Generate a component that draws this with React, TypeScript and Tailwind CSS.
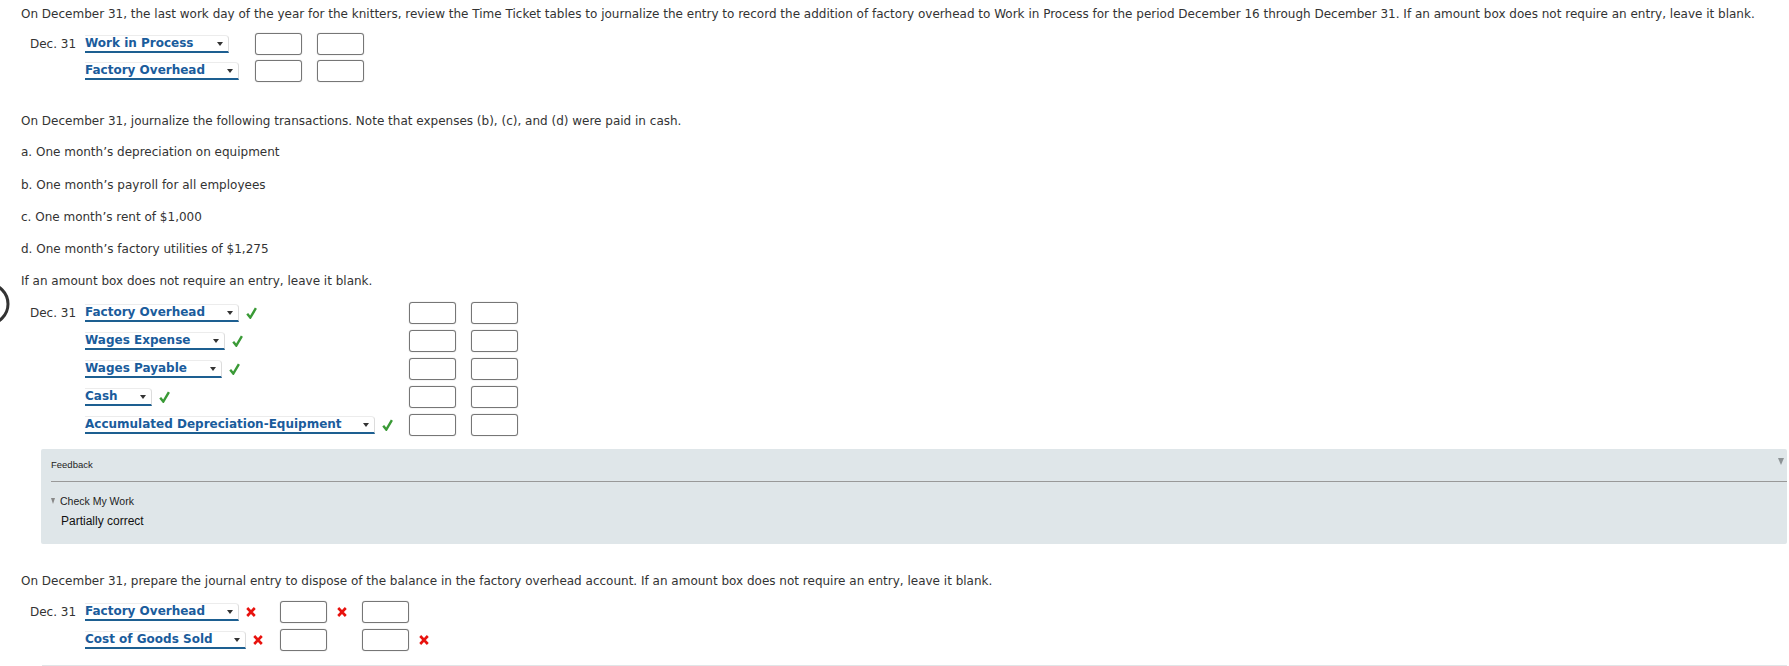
import React from "react";

type Mark = "ok" | "bad" | null;

function Check() {
  return (
    <svg width="11" height="12" viewBox="0 0 11 12" className="shrink-0">
      <path d="M1.2 6.8 L4.3 10.6 L9.9 1.2" fill="none" stroke="#3a9a36" strokeWidth="2.4" />
    </svg>
  );
}

function Cross() {
  return (
    <svg width="10" height="10" viewBox="0 0 10 10" className="shrink-0">
      <path d="M1.2 1 L8.8 9 M8.8 1 L1.2 9" fill="none" stroke="#e8120e" strokeWidth="2.6" />
    </svg>
  );
}

function Select({ label, className, mark }: { label: string; className: string; mark?: Mark }) {
  return (
    <div className="flex items-center gap-[7px]">
      <div
        className={`relative flex h-[18px] items-center rounded-tr-[4px] border-t border-r border-b-2 border-t-[#ececec] border-r-[#dcdcdc] border-b-[#1d5f91] bg-white text-[12px] font-bold text-[#1a5c9c] ${className}`}
      >
        <span className="leading-[15px]">{label}</span>
        <span className="absolute right-[5px] top-[6px] h-0 w-0 border-x-[3px] border-t-[4px] border-x-transparent border-t-[#333]" />
      </div>
      {mark === "ok" && <Check />}
      {mark === "bad" && <Cross />}
    </div>
  );
}

function Box() {
  return <div className="h-[22px] w-[47px] shrink-0 rounded-[3px] border border-[#767676] bg-white shadow-[0_0_1px_#999]" />;
}

function Date({ show }: { show: boolean }) {
  return <div className="w-[64px] shrink-0 pl-[9px] leading-[16px]">{show ? "Dec. 31" : ""}</div>;
}

export default function App() {
  return (
    <div className="relative min-h-[666px] bg-white pl-[21px] pr-[2px] pt-[6px] font-['DejaVu_Sans',Verdana,sans-serif] text-[12px] text-[#333]">
      <svg width="12" height="44" viewBox="0 0 12 44" className="absolute left-0 top-[283px]">
        <circle cx="-12" cy="21" r="20" fill="none" stroke="#333" strokeWidth="3" />
      </svg>

      <p className="leading-[16px]">
        On December 31, the last work day of the year for the knitters, review the Time Ticket tables to journalize the entry to record the addition of factory overhead to Work in Process for the period December 16 through December 31. If an amount box does not require an entry, leave it blank.
      </p>

      <div className="mt-[11px] flex flex-col gap-[6px]">
        <div className="flex h-[21px] items-center">
          <Date show />
          <div className="w-[170px] shrink-0">
            <Select label="Work in Process" className="w-[144px]" />
          </div>
          <div className="flex gap-[15px]">
            <Box />
            <Box />
          </div>
        </div>
        <div className="flex h-[21px] items-center">
          <Date show={false} />
          <div className="w-[170px] shrink-0">
            <Select label="Factory Overhead" className="w-[154px]" />
          </div>
          <div className="flex gap-[15px]">
            <Box />
            <Box />
          </div>
        </div>
      </div>

      <p className="mt-[32px] leading-[16px]">
        On December 31, journalize the following transactions. Note that expenses (b), (c), and (d) were paid in cash.
      </p>
      <p className="mt-[15px] leading-[16px]">a. One month’s depreciation on equipment</p>
      <p className="mt-[17px] leading-[16px]">b. One month’s payroll for all employees</p>
      <p className="mt-[16px] leading-[16px]">c. One month’s rent of $1,000</p>
      <p className="mt-[16px] leading-[16px]">d. One month’s factory utilities of $1,275</p>
      <p className="mt-[16px] leading-[16px]">If an amount box does not require an entry, leave it blank.</p>

      <div className="mt-[13px] flex flex-col gap-[7px]">
        {[
          { label: "Factory Overhead", w: "w-[154px]" },
          { label: "Wages Expense", w: "w-[140px]" },
          { label: "Wages Payable", w: "w-[137px]" },
          { label: "Cash", w: "w-[67px]" },
          { label: "Accumulated Depreciation-Equipment", w: "w-[290px]" },
        ].map((r, i) => (
          <div key={r.label} className="flex h-[21px] items-center">
            <Date show={i === 0} />
            <div className="w-[324px] shrink-0">
              <Select label={r.label} className={r.w} mark="ok" />
            </div>
            <div className="flex gap-[15px]">
              <Box />
              <Box />
            </div>
          </div>
        ))}
      </div>

      <div className="relative ml-[20px] mt-[14px] h-[95px] rounded-[2px] bg-[#dfe6e9] pl-[10px] pt-[10px] font-['Liberation_Sans',Arial,sans-serif] text-[#222]">
        <div className="text-[9.5px] leading-[12px]">Feedback</div>
        <span className="absolute right-[3px] top-[9px] h-0 w-0 border-x-[3.5px] border-t-[7px] border-x-transparent border-t-[#8d9396]" />
        <div className="mt-[10px] h-px bg-[#999]" />
        <div className="mt-[13px] flex items-center gap-[5px] text-[10.5px] leading-[12px]">
          <span className="h-0 w-0 border-x-[2.5px] border-t-[6px] border-x-transparent border-t-[#888]" />
          <span>Check My Work</span>
        </div>
        <div className="mt-[7px] pl-[10px] text-[12px] leading-[14px] text-[#111]">Partially correct</div>
      </div>

      <p className="mt-[29px] leading-[16px]">
        On December 31, prepare the journal entry to dispose of the balance in the factory overhead account. If an amount box does not require an entry, leave it blank.
      </p>

      <div className="mt-[12px] flex flex-col gap-[7px]">
        <div className="flex h-[21px] items-center">
          <Date show />
          <div className="w-[195px] shrink-0">
            <Select label="Factory Overhead" className="w-[154px]" mark="bad" />
          </div>
          <Box />
          <div className="flex w-[35px] shrink-0 pl-[10px]">
            <Cross />
          </div>
          <Box />
        </div>
        <div className="flex h-[21px] items-center">
          <Date show={false} />
          <div className="w-[195px] shrink-0">
            <Select label="Cost of Goods Sold" className="w-[161px]" mark="bad" />
          </div>
          <Box />
          <div className="w-[35px] shrink-0" />
          <Box />
          <div className="flex pl-[10px]">
            <Cross />
          </div>
        </div>
      </div>

      <div className="ml-[21px] mt-[15px] h-px bg-[#e1e5e7]" />
    </div>
  );
}
